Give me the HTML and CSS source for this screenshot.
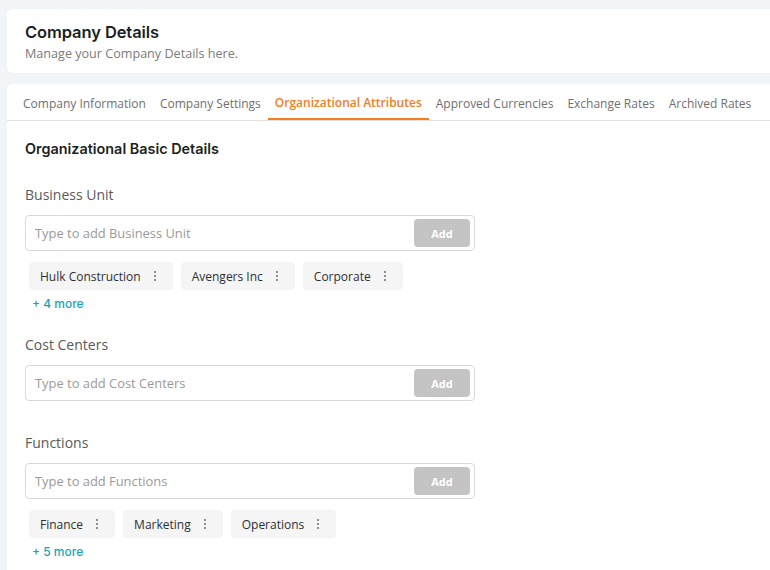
FILE: index.html
```html
<!DOCTYPE html>
<html>
<head>
<meta charset="utf-8">
<link rel="stylesheet" href="styles.css">
</head>
<body>
<div class="page">
  <div class="card header-card">
    <div class="title">Company Details</div>
    <div class="subtitle">Manage your Company Details here.</div>
  </div>
  <div class="card main-card">
    <div class="tabs">
      <div class="tab">Company Information</div>
      <div class="tab">Company Settings</div>
      <div class="tab active">Organizational Attributes</div>
      <div class="tab">Approved Currencies</div>
      <div class="tab">Exchange Rates</div>
      <div class="tab">Archived Rates</div>
    </div>
    <div class="content">
      <div class="section-title">Organizational Basic Details</div>

      <div class="field first">
        <div class="label">Business Unit</div>
        <div class="input-box">
          <span class="placeholder">Type to add Business Unit</span>
          <span class="add-btn">Add</span>
        </div>
        <div class="chips">
          <span class="chip">Hulk Construction<span class="dots"><i></i><i></i><i></i></span></span>
          <span class="chip">Avengers Inc<span class="dots"><i></i><i></i><i></i></span></span>
          <span class="chip">Corporate<span class="dots"><i></i><i></i><i></i></span></span>
        </div>
        <div class="more">+ 4 more</div>
      </div>

      <div class="field cost">
        <div class="label">Cost Centers</div>
        <div class="input-box">
          <span class="placeholder">Type to add Cost Centers</span>
          <span class="add-btn">Add</span>
        </div>
      </div>

      <div class="field functions">
        <div class="label">Functions</div>
        <div class="input-box">
          <span class="placeholder">Type to add Functions</span>
          <span class="add-btn">Add</span>
        </div>
        <div class="chips">
          <span class="chip">Finance<span class="dots"><i></i><i></i><i></i></span></span>
          <span class="chip">Marketing<span class="dots"><i></i><i></i><i></i></span></span>
          <span class="chip">Operations<span class="dots"><i></i><i></i><i></i></span></span>
        </div>
        <div class="more">+ 5 more</div>
      </div>
    </div>
  </div>
</div>
</body>
</html>
```

FILE: styles.css
```css
html, body {
  margin: 0;
  padding: 0;
  background: #f2f5f8;
  overflow: hidden;
  width: 770px;
  height: 570px;
}
.page {
  padding: 9px 0 0 7px;
  display: flex;
  flex-direction: column;
  gap: 11px;
  margin-right: -30px;
}
.card {
  background: #ffffff;
  border-radius: 6px;
}
.header-card {
  height: 64px;
  box-sizing: border-box;
  padding: 12px 18px 0;
}
.title {
  font-family: Inter, "Open Sans", sans-serif;
  font-size: 16.5px;
  font-weight: 600;
  color: #1d1f24;
  line-height: 22px;
  letter-spacing: -0.1px;
}
.subtitle {
  font-family: "Open Sans", sans-serif;
  font-size: 12.6px;
  color: #7b7b7b;
  line-height: 20px;
  margin-top: 1px;
}
.main-card {
  border-radius: 6px 0 0 0;
  height: 500px;
}
.tabs {
  display: flex;
  padding-left: 9px;
  border-bottom: 1px solid #e1e1e1;
  height: 37px;
  box-sizing: border-box;
}
.tab {
  font-family: "Open Sans", sans-serif;
  font-size: 12px;
  color: #6f6f6f;
  padding: 2px 7px 0;
  height: 36px;
  box-sizing: border-box;
  display: flex;
  align-items: center;
  white-space: nowrap;
}
.tab.active {
  color: #f57c1f;
  font-weight: 600;
  border-bottom: 2px solid #f57c1f;
  padding-top: 3px;
}
.content {
  padding: 18px 0 0 18px;
  display: flex;
  flex-direction: column;
}
.section-title {
  font-family: Inter, "Open Sans", sans-serif;
  font-size: 14.4px;
  font-weight: 600;
  color: #1d1f24;
  line-height: 20px;
}
.field {
  display: flex;
  flex-direction: column;
  width: 450px;
}
.field.first { margin-top: 26px; }
.field.cost { margin-top: 22px; }
.field.functions { margin-top: 32px; }
.label {
  font-family: "Open Sans", sans-serif;
  font-size: 14px;
  color: #5a5a5a;
  line-height: 20px;
  margin-bottom: 10px;
}
.input-box {
  height: 36px;
  box-sizing: border-box;
  border: 1px solid #d9d9d9;
  border-radius: 4px;
  display: flex;
  align-items: center;
  justify-content: space-between;
  padding: 0 4px 0 9px;
}
.placeholder {
  font-family: "Open Sans", sans-serif;
  font-size: 12.9px;
  color: #9a9a9a;
}
.add-btn {
  width: 56px;
  height: 28px;
  border-radius: 4px;
  background: #c4c4c4;
  color: #ffffff;
  font-family: "Open Sans", sans-serif;
  font-size: 11px;
  font-weight: 700;
  display: flex;
  align-items: center;
  justify-content: center;
}
.chips {
  display: flex;
  gap: 8px;
  padding-left: 4px;
  margin-top: 11px;
}
.chip {
  height: 28px;
  background: #f5f5f5;
  border-radius: 4px;
  display: flex;
  align-items: center;
  padding: 0 17px 0 11px;
  font-family: "Open Sans", sans-serif;
  font-size: 12px;
  color: #2c2f36;
}
.dots {
  display: flex;
  flex-direction: column;
  gap: 2px;
  margin-left: 13px;
}
.dots i {
  display: block;
  width: 2px;
  height: 2px;
  background: #8a8f98;
}
.more {
  font-family: Inter, "Open Sans", sans-serif;
  font-size: 12px;
  font-weight: 500;
  color: #16a6b6;
  line-height: 18px;
  margin-top: 5px;
  padding-left: 7px;
}
```
